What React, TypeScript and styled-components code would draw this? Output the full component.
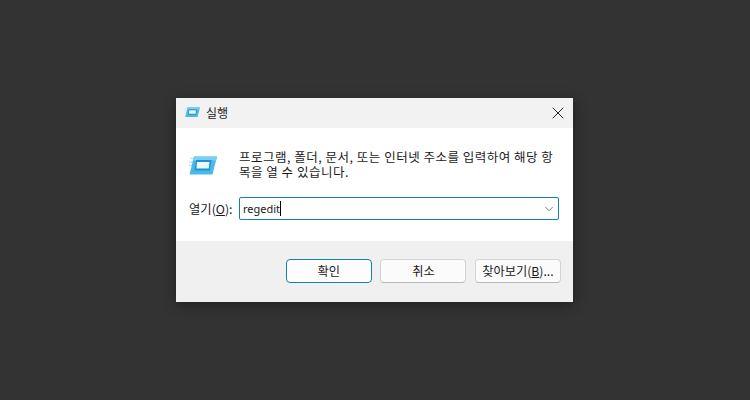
import styled, { createGlobalStyle } from "styled-components";
import { X, ChevronDown } from "lucide-react";

const GlobalStyle = createGlobalStyle`
  html, body {
    margin: 0;
    padding: 0;
    background: #333333;
  }
`;

const RunIcon = ({ width }: { width: number }) => (
  <IconSvg width={width} height={width * 0.68} viewBox="0 0 28 19">
    <path d="M1 2.5h5M0 6h4.5M0 9.5h3.5" stroke="#b5e5f8" strokeWidth="1.6" fill="none" />
    <path d="M5 0.5h23l-4.5 18H0.5z" fill="#4bb9e8" />
    <path d="M5 0.5h23l-1 4H4z" fill="#7ad0f2" />
    <path d="M7 4h15.5l-1.6 10.5H5.5z" fill="#1f93d2" />
    <path d="M8 6h12.5l-0.7 6.5H7.4z" fill="#eaf7fd" />
  </IconSvg>
);

const App = () => {
  return (
    <Page>
      <GlobalStyle />
      <Dialog>
        <TitleBar>
          <TitleIcon>
            <RunIcon width={15} />
          </TitleIcon>
          <TitleText>실행</TitleText>
          <CloseButton>
            <X size={20} strokeWidth={1.1} />
          </CloseButton>
        </TitleBar>
        <Body>
          <Message>
            <MessageIcon>
              <RunIcon width={28} />
            </MessageIcon>
            <MessageText>
              프로그램, 폴더, 문서, 또는 인터넷 주소를 입력하여 해당 항
              <br />
              목을 열 수 있습니다.
            </MessageText>
          </Message>
          <OpenRow>
            <OpenLabel>
              열기(<u>O</u>):
            </OpenLabel>
            <Combo>
              <ComboValue>regedit</ComboValue>
              <Caret />
              <ChevronSlot>
                <ChevronDown size={14} strokeWidth={1.2} />
              </ChevronSlot>
            </Combo>
          </OpenRow>
        </Body>
        <Footer>
          <ActionButton $primary>확인</ActionButton>
          <ActionButton>취소</ActionButton>
          <ActionButton>
            찾아보기(<u>B</u>)...
          </ActionButton>
        </Footer>
      </Dialog>
    </Page>
  );
};

const IconSvg = styled.svg`
  display: block;
`;

const Page = styled.div`
  width: 750px;
  height: 400px;
  display: flex;
  align-items: center;
  justify-content: center;
  background: #333333;
  font-family: "Noto Sans CJK KR", "Liberation Sans", sans-serif;
  color: #1a1a1a;
  overflow: hidden;
`;

const Dialog = styled.div`
  width: 397px;
  height: 204px;
  display: flex;
  flex-direction: column;
  background: #ffffff;
  box-shadow: 0 3px 12px rgba(0, 0, 0, 0.4);
  margin-left: -1px;
`;

const TitleBar = styled.div`
  height: 30px;
  display: flex;
  align-items: center;
  padding: 0 0 1px 9px;
  box-sizing: border-box;
  background: #f2f2f2;
`;

const TitleIcon = styled.div`
  width: 16px;
  display: flex;
  margin-right: 5px;
`;

const TitleText = styled.span`
  font-size: 12px;
`;

const CloseButton = styled.div`
  margin-left: auto;
  margin-right: 5px;
  display: flex;
  color: #111;
`;

const Body = styled.div`
  flex: 1;
  display: flex;
  flex-direction: column;
  padding: 21px 14px 0 13px;
`;

const Message = styled.div`
  display: flex;
`;

const MessageIcon = styled.div`
  width: 50px;
  padding-top: 7px;
  flex-shrink: 0;
`;

const MessageText = styled.p`
  margin: 0;
  font-size: 12.5px;
  letter-spacing: 0.5px;
  line-height: 15px;
  white-space: nowrap;
`;

const OpenRow = styled.div`
  display: flex;
  align-items: center;
  margin-top: 18px;
`;

const OpenLabel = styled.span`
  width: 50px;
  font-size: 12.3px;
  white-space: nowrap;
`;

const Combo = styled.div`
  width: 320px;
  height: 23px;
  box-sizing: border-box;
  display: flex;
  align-items: center;
  position: relative;
  border: 1px solid #1480ad;
  border-radius: 2px;
  padding-left: 3px;
`;

const ComboValue = styled.span`
  font-family: "Noto Sans", "Liberation Sans", sans-serif;
  font-size: 11px;
`;

const Caret = styled.span`
  width: 1px;
  height: 15px;
  background: #000;
`;

const ChevronSlot = styled.div`
  margin-left: auto;
  margin-right: 2px;
  display: flex;
  color: #555;
`;

const Footer = styled.div`
  height: 61px;
  box-sizing: border-box;
  display: flex;
  justify-content: flex-end;
  gap: 8.6px;
  padding: 18px 12px 0 0;
  background: #f0f0f0;
`;

const ActionButton = styled.div<{ $primary?: boolean }>`
  width: 86px;
  height: 24px;
  box-sizing: border-box;
  display: flex;
  align-items: center;
  justify-content: center;
  white-space: nowrap;
  font-size: 12.2px;
  background: ${(p) => (p.$primary ? "#fdfdfd" : "#fbfbfb")};
  border: 1px solid ${(p) => (p.$primary ? "#1480ad" : "#d4d4d4")};
  border-bottom-color: ${(p) => (p.$primary ? "#1480ad" : "#b8b8b8")};
  border-radius: 4px;
`;

export default App;
